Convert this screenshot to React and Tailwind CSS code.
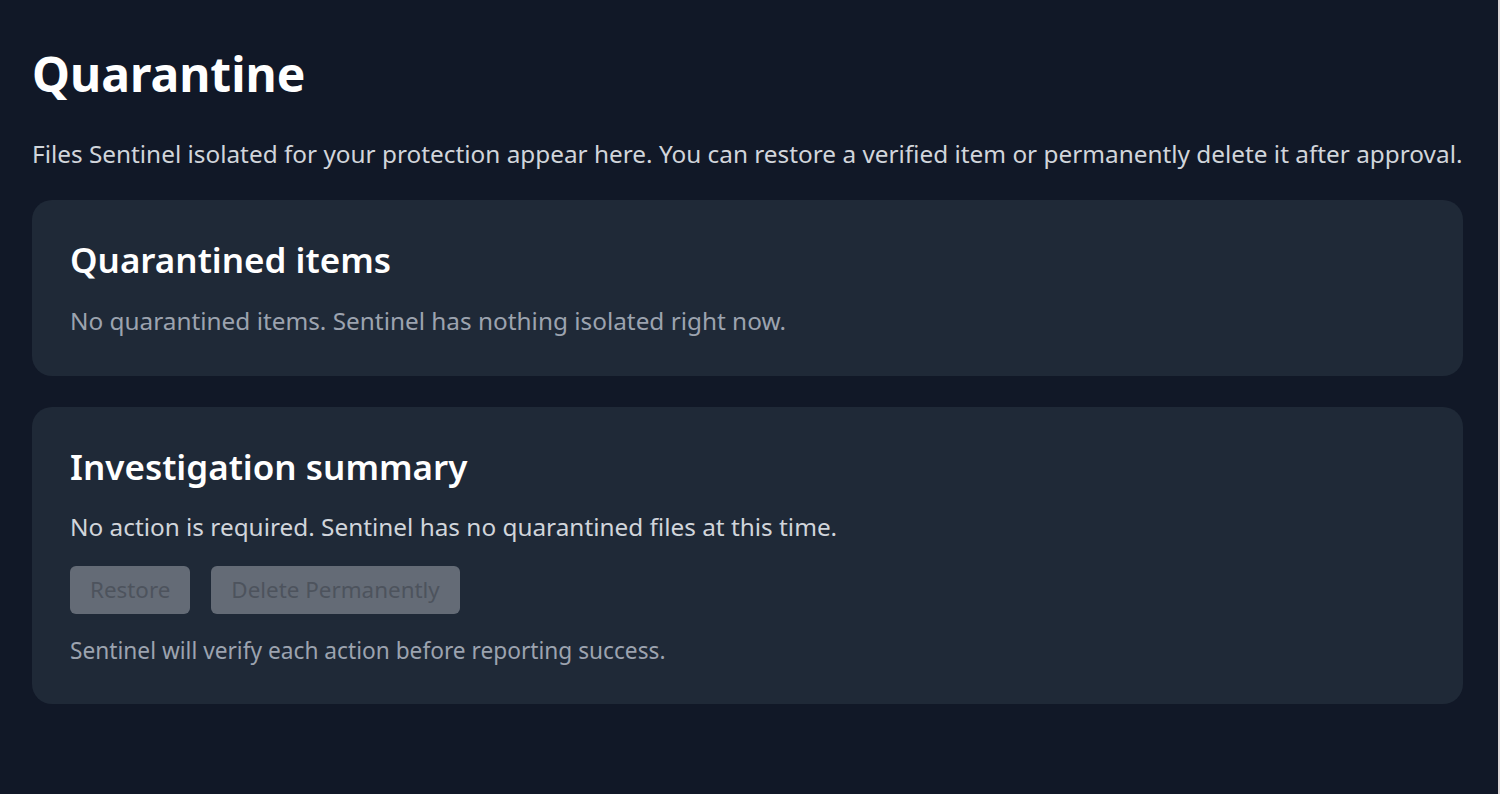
export default function App() {
  return (
    <div
      className="min-h-screen bg-[#111827] border-r-2 border-[#ddd6d6] text-white"
      style={{ fontFamily: '"Noto Sans", "Open Sans", sans-serif' }}
    >
      <div className="pl-[32px] pr-[35px] pt-[41px] pb-[40px]">
        <h1 className="text-[48px] leading-[65px] font-bold mb-[30px]">Quarantine</h1>
        <p className="text-[24.35px] leading-[36px] text-[#d1d5db] mb-[28px] whitespace-nowrap">
          Files Sentinel isolated for your protection appear here. You can restore a verified item or
          permanently delete it after approval.
        </p>

        <div className="flex flex-col gap-[31px]">
          <section className="bg-[#1f2937] rounded-[20px] px-[38px] pt-[37px] pb-[37px]">
            <h2 className="text-[35px] leading-[45px] font-semibold mb-[21px]">Quarantined items</h2>
            <p className="text-[24.35px] leading-[36px] text-[#9ca3af]">
              No quarantined items. Sentinel has nothing isolated right now.
            </p>
          </section>

          <section className="bg-[#1f2937] rounded-[20px] px-[38px] pt-[37px] pb-[37px]">
            <h2 className="text-[35px] leading-[45px] font-semibold mb-[20px]">
              Investigation summary
            </h2>
            <p className="text-[24.35px] leading-[36px] text-[#d1d5db] mb-[21px]">
              No action is required. Sentinel has no quarantined files at this time.
            </p>
            <div className="flex gap-[21px] mb-[21px]">
              <button
                disabled
                className="h-[48px] px-[20px] rounded-[6px] bg-[#646b76] text-[#4d535d] text-[22.4px] cursor-not-allowed"
              >
                Restore
              </button>
              <button
                disabled
                className="h-[48px] px-[20px] rounded-[6px] bg-[#646b76] text-[#4d535d] text-[22.4px] cursor-not-allowed"
              >
                Delete Permanently
              </button>
            </div>
            <p className="text-[22.7px] leading-[32px] text-[#9ca3af]">
              Sentinel will verify each action before reporting success.
            </p>
          </section>
        </div>
      </div>
    </div>
  )
}
